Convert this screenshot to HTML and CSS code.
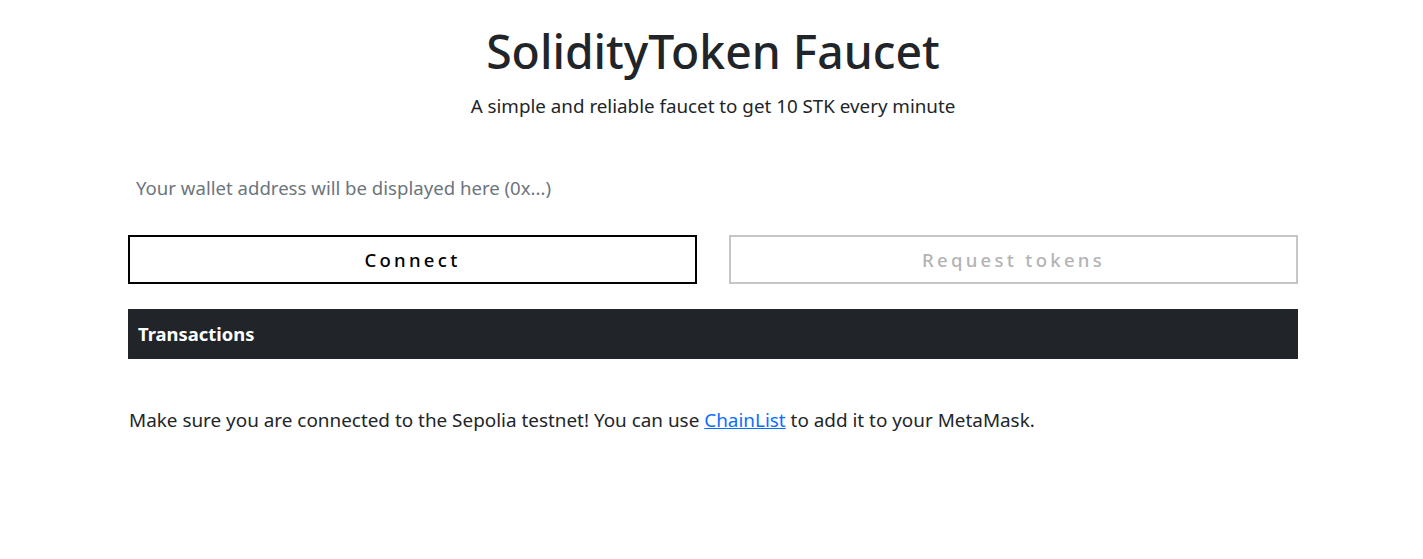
FILE: index.html
```html
<!DOCTYPE html>
<html lang="en">
<head>
<meta charset="utf-8">
<title>SolidityToken Faucet</title>
<link rel="stylesheet" href="styles.css">
</head>
<body>
<div class="container">
  <header class="hero">
    <h1 class="title">SolidityToken Faucet</h1>
    <p class="subtitle">A simple and reliable faucet to get 10 STK every minute</p>
  </header>
  <div class="address-row">
    <input class="address" type="text" placeholder="Your wallet address will be displayed here (0x...)" readonly>
  </div>
  <div class="actions">
    <button class="btn btn-connect">Connect</button>
    <button class="btn btn-request" disabled>Request tokens</button>
  </div>
  <div class="tx-panel">
    <div class="tx-header">Transactions</div>
  </div>
  <p class="note">Make sure you are connected to the Sepolia testnet! You can use <a href="#">ChainList</a> to add it to your MetaMask.</p>
</div>
</body>
</html>
```
FILE: styles.css
```css
* { box-sizing: border-box; }
body {
  margin: 0;
  padding-left: 3px;
  font-family: "Noto Sans", "Open Sans", sans-serif;
  color: #212529;
  background: #fff;
}
.container {
  width: 1170px;
  margin: 0 auto;
}
.hero {
  text-align: center;
  padding-top: 24px;
}
.title {
  margin: 0;
  font-size: 46.3px;
  font-weight: 500;
  line-height: 1.2;
}
.subtitle {
  margin: 12px 0 0;
  font-size: 18.8px;
  line-height: 1.5;
}
.address-row {
  margin-top: 49px;
}
.address {
  width: 100%;
  border: none;
  outline: none;
  padding: 6px 8px;
  font-family: inherit;
  font-size: 18.6px;
  color: #212529;
  background: transparent;
}
.address::placeholder { color: #6c757d; }
.actions {
  display: flex;
  gap: 32px;
  margin-top: 29px;
}
.btn {
  flex: 1;
  height: 49px;
  background: #fff;
  font-family: inherit;
  font-size: 18.5px;
  letter-spacing: 3.3px;
  font-weight: 500;
}
.btn-connect {
  border: 2px solid #000;
  color: #000;
}
.btn-request {
  border: 2px solid #c6c6c6;
  color: #b3b3b3;
}
.tx-panel {
  margin-top: 25px;
}
.tx-header {
  background: #212529;
  color: #fff;
  height: 50px;
  display: flex;
  align-items: center;
  padding-left: 10px;
  font-size: 18.4px;
  font-weight: 700;
}
.note {
  margin: 47px 0 0 1px;
  font-size: 18.9px;
  line-height: 1.5;
}
.note a { color: #0d6efd; }
```
